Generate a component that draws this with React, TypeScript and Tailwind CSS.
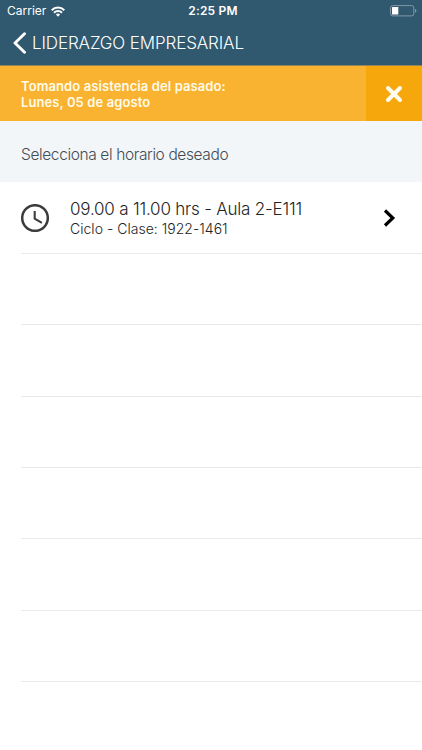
const rows = ['h-[71px]', 'h-[72px]', 'h-[71px]', 'h-[71px]', 'h-[72px]', 'h-[71px]']

export default function App() {
  return (
    <div className="flex h-[750px] w-[422px] flex-col overflow-hidden bg-white font-['Inter',sans-serif] whitespace-nowrap">
      <header className="h-[66px] border-b border-[#8f875a] bg-[#30586f] text-white">
        <StatusBar />
        <div className="flex h-[42px] items-center pl-[13px]">
          <svg width="14" height="22" viewBox="0 0 14 22" fill="none">
            <path d="M11.500 1.800L2 11l9.500 9.200" stroke="white" strokeWidth="2.900" strokeLinecap="round" strokeLinejoin="round" />
          </svg>
          <h1 className="ml-[5px] text-[17px] leading-[22px] font-light tracking-[-0.12px]">LIDERAZGO EMPRESARIAL</h1>
        </div>
      </header>

      <Notice />

      <div className="flex h-[61px] items-center bg-[#f2f6f8] pt-[6px] pl-[21px]">
        <h2 className="text-[15.5px] font-light tracking-[-0.38px] text-[#434c54]">Selecciona el horario deseado</h2>
      </div>

      <main className="pl-[21px]">
        <ScheduleRow />
        {rows.map((height, i) => (
          <div key={i} className={`${height} border-b border-[#e9e9e9]`} />
        ))}
      </main>
    </div>
  )
}

function StatusBar() {
  return (
    <div className="grid h-[22px] grid-cols-[1fr_auto_1fr] items-center pr-[5px] pl-[7px]">
      <div className="flex items-center gap-[5px]">
        <span className="text-[12px] leading-[22px]">Carrier</span>
        <svg width="14" height="11" viewBox="0 0 14 11" fill="none" stroke="white" strokeWidth="2">
          <path d="M0.700 4.200a8.900 8.900 0 0 1 12.600 0" />
          <path d="M3 6.700a5.700 5.700 0 0 1 8 0" />
          <path d="M4.900 8.500a3 3 0 0 1 4.200 0L7 10.700z" fill="white" stroke="none" />
        </svg>
      </div>
      <span className="pl-[2px] text-[12px] font-semibold tracking-[0.200px]">2:25 PM</span>
      <svg className="justify-self-end" width="27" height="12" viewBox="0 0 27 12" fill="none">
        <rect x="0.500" y="0.600" width="23.300" height="10.300" rx="2.300" stroke="#8299a7" />
        <rect x="2" y="2.100" width="6.300" height="7.300" rx="0.500" fill="white" />
        <path d="M25 4v3.800c1.900-.6 1.900-3.200 0-3.800z" fill="#8299a7" />
      </svg>
    </div>
  )
}

function Notice() {
  return (
    <section className="flex h-[55px] bg-[#f9b331] text-[#fffbe9]">
      <p className="flex-1 pt-[12px] pl-[21px] text-[13px] leading-[16px] font-semibold tracking-[0.1px]">
        Tomando asistencia del pasado:
        <br />
        Lunes, 05 de agosto
      </p>
      <button aria-label="Cerrar" className="flex w-[56px] items-center justify-center bg-[#f5a70c] pr-px">
        <svg width="18" height="18" viewBox="0 0 18 18" fill="none">
          <path d="M3 3l12 12M15 3L3 15" stroke="#fffdf2" strokeWidth="4" strokeLinecap="round" />
        </svg>
      </button>
    </section>
  )
}

function ScheduleRow() {
  return (
    <div className="flex h-[72px] items-center border-b border-[#e9e9e9]">
      <svg width="28" height="28" viewBox="0 0 28 28" fill="none" stroke="#3c3c3c">
        <circle cx="14" cy="14" r="12.800" strokeWidth="2.500" />
        <path d="M13.700 7v7.700l7.200 4.200" strokeWidth="2.100" />
      </svg>
      <div className="ml-[21px] flex-1 pt-[2px] text-[#242424]">
        <p className="text-[17px] leading-[20px] font-light tracking-[-0.2px]">09.00 a 11.00 hrs - Aula 2-E111</p>
        <p className="text-[14px] leading-[19px] font-light tracking-[0.02px]">Ciclo - Clase: 1922-1461</p>
      </div>
      <svg className="mr-[26px]" width="13" height="18" viewBox="0 0 13 18" fill="none">
        <path d="M2 1.500L9.800 9 2 16.500" stroke="black" strokeWidth="3.200" />
      </svg>
    </div>
  )
}
